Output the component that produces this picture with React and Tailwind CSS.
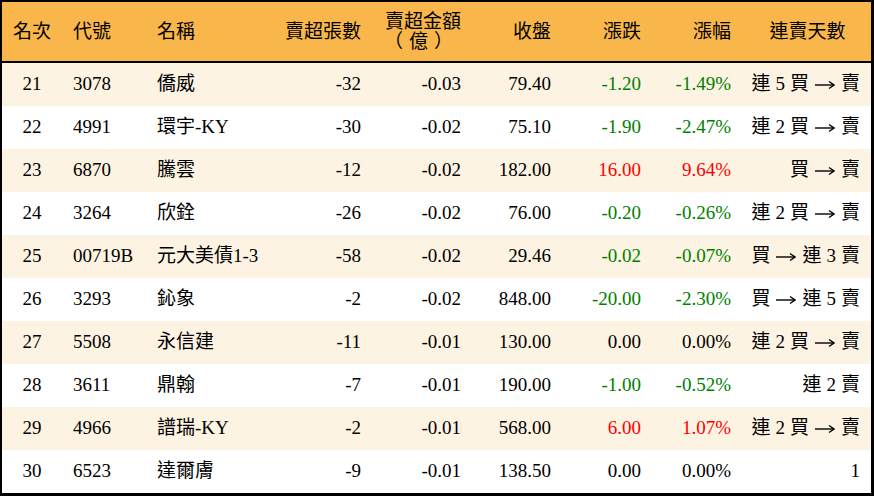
import React from "react";

const rows = [
  ["21", "3078", "僑威", "-32", "-0.03", "79.40", "-1.20", "-1.49%", "連 5 買 → 賣"],
  ["22", "4991", "環宇-KY", "-30", "-0.02", "75.10", "-1.90", "-2.47%", "連 2 買 → 賣"],
  ["23", "6870", "騰雲", "-12", "-0.02", "182.00", "16.00", "9.64%", "買 → 賣"],
  ["24", "3264", "欣銓", "-26", "-0.02", "76.00", "-0.20", "-0.26%", "連 2 買 → 賣"],
  ["25", "00719B", "元大美債1-3", "-58", "-0.02", "29.46", "-0.02", "-0.07%", "買 → 連 3 賣"],
  ["26", "3293", "鈊象", "-2", "-0.02", "848.00", "-20.00", "-2.30%", "買 → 連 5 賣"],
  ["27", "5508", "永信建", "-11", "-0.01", "130.00", "0.00", "0.00%", "連 2 買 → 賣"],
  ["28", "3611", "鼎翰", "-7", "-0.01", "190.00", "-1.00", "-0.52%", "連 2 賣"],
  ["29", "4966", "譜瑞-KY", "-2", "-0.01", "568.00", "6.00", "1.07%", "連 2 買 → 賣"],
  ["30", "6523", "達爾膚", "-9", "-0.01", "138.50", "0.00", "0.00%", "1"],
];

const cols = "grid grid-cols-[60px_84px_126px_100px_100px_90px_90px_90px_129px]";

const changeColor = (v) => {
  const n = parseFloat(v);
  if (n > 0) return "text-[#ff0000]";
  if (n < 0) return "text-[#008000]";
  return "text-black";
};

// streak text: render the arrow as a long stroke like the source font
const Streak = ({ text }) => {
  const parts = text.split(" ");
  return (
    <span className="inline-flex items-center justify-end gap-[5px]">
      {parts.map((p, i) =>
        p === "→" ? (
          <svg key={i} width="20" height="10" viewBox="0 0 20 10" className="mx-[1px]">
            <path d="M0 5 H18" stroke="black" strokeWidth="1.4" />
            <path d="M14 1.5 L19 5 L14 8.5" fill="none" stroke="black" strokeWidth="1.4" />
          </svg>
        ) : (
          <span key={i}>{p}</span>
        )
      )}
    </span>
  );
};

export default function App() {
  return (
    <div
      className="w-[874px] h-[496px] bg-white border-t-2 border-l-2 border-r-[3px] border-b-[3px] border-black text-[19px] text-black"
      style={{ fontFamily: '"Liberation Serif", "Noto Sans CJK TC", serif' }}
    >
      <div className={`${cols} h-[61px] bg-[#f9b74b] border-b-2 border-black items-center leading-[20px]`}>
        <div className="text-center">名次</div>
        <div className="pl-[11px]">代號</div>
        <div className="pl-[11px]">名稱</div>
        <div className="pr-[11px] text-right">賣超張數</div>
        <div className="pr-[11px] text-right">
          <div>賣超金額</div>
          <div className="tracking-[6px] pr-[2px]">（億）</div>
        </div>
        <div className="pr-[11px] text-right">收盤</div>
        <div className="pr-[11px] text-right">漲跌</div>
        <div className="pr-[11px] text-right">漲幅</div>
        <div className="text-center pl-[2px]">連賣天數</div>
      </div>
      {rows.map((r, i) => {
        const color = changeColor(r[6]);
        return (
          <div
            key={r[0]}
            className={`${cols} h-[43px] items-center ${i % 2 === 0 ? "bg-[#fdf3e2]" : "bg-white"}`}
          >
            <div className="text-center">{r[0]}</div>
            <div className="pl-[11px]">{r[1]}</div>
            <div className="pl-[11px] whitespace-nowrap">{r[2]}</div>
            <div className="pr-[11px] text-right">{r[3]}</div>
            <div className="pr-[11px] text-right">{r[4]}</div>
            <div className="pr-[11px] text-right">{r[5]}</div>
            <div className={`pr-[11px] text-right ${color}`}>{r[6]}</div>
            <div className={`pr-[11px] text-right ${color}`}>{r[7]}</div>
            <div className="pr-[11px] flex justify-end">
              <Streak text={r[8]} />
            </div>
          </div>
        );
      })}
    </div>
  );
}
